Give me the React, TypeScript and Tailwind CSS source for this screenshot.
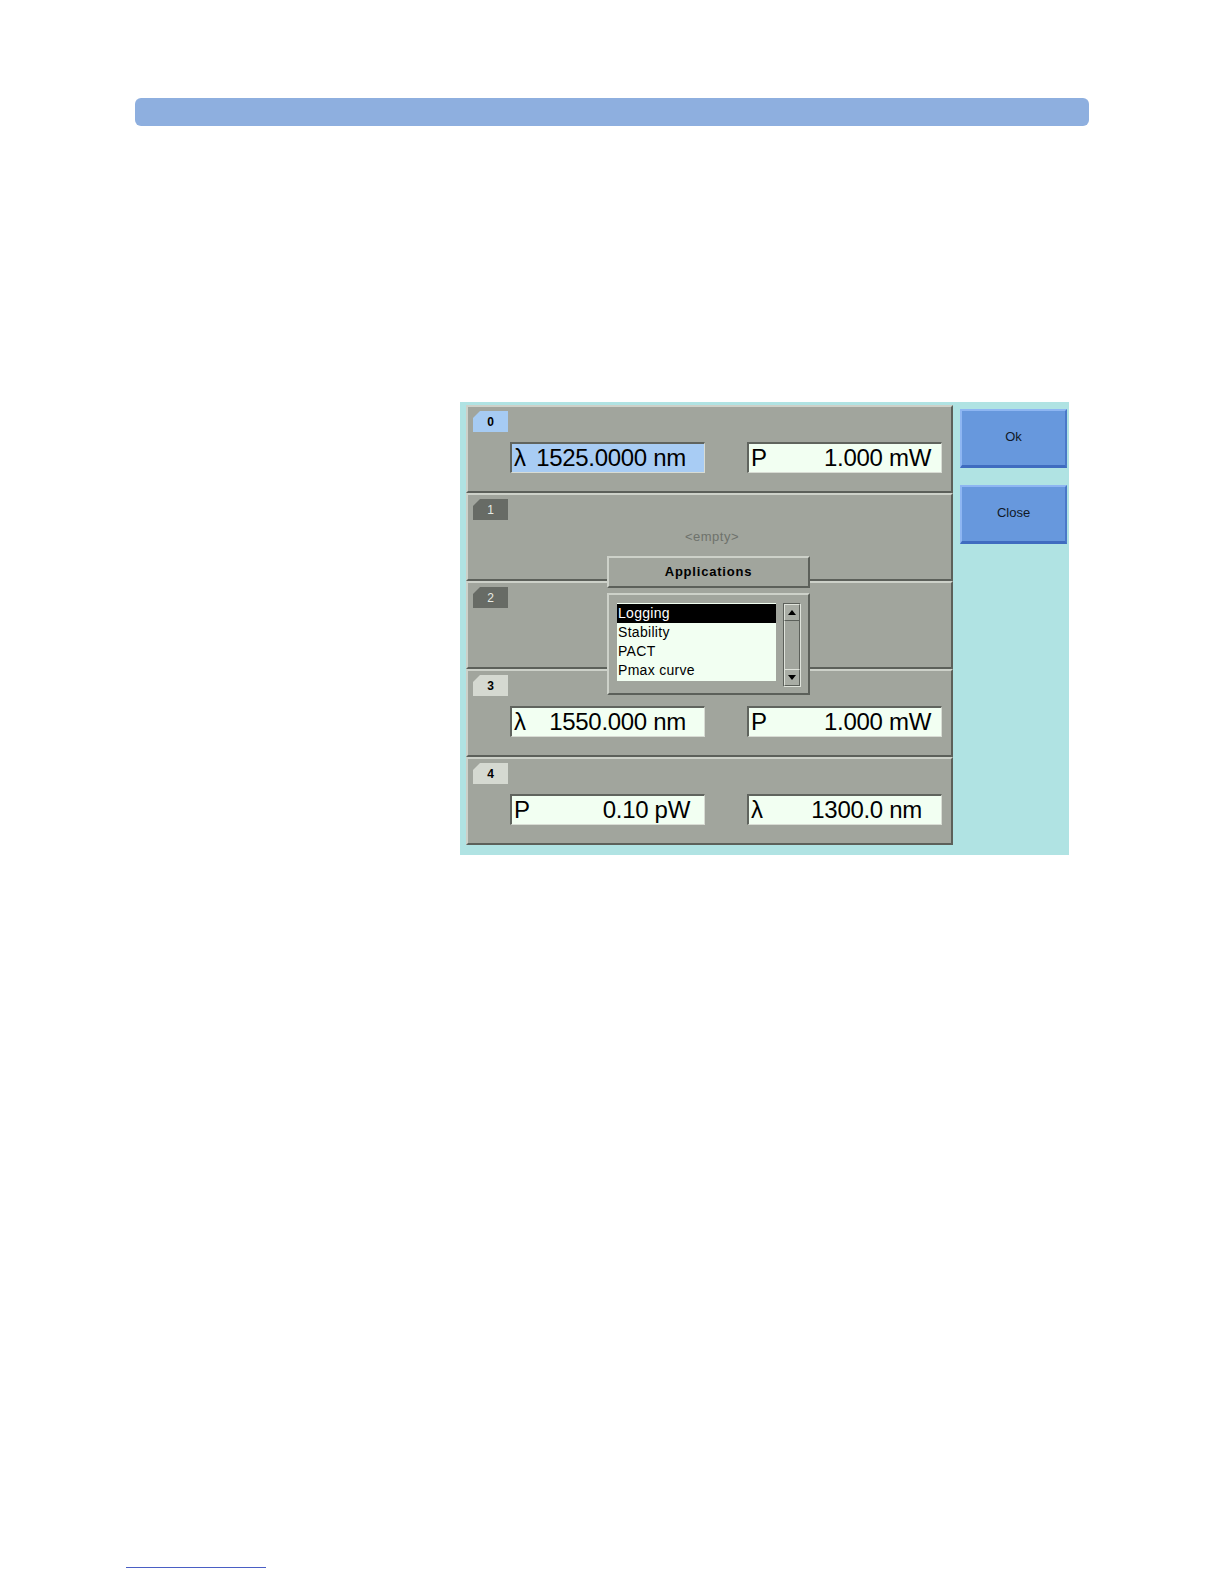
import React from 'react';

type Field = { sym: string; value: string; pr: string; hi?: boolean };

interface SlotData {
  id: string;
  tab: 'blue' | 'dark' | 'light';
  fields?: Field[];
  empty?: boolean;
}

const slots: SlotData[] = [
  {
    id: '0',
    tab: 'blue',
    fields: [
      { sym: 'λ', value: '1525.0000 nm', pr: 'pr-[18px]', hi: true },
      { sym: 'P', value: '1.000 mW', pr: 'pr-[10px]' },
    ],
  },
  { id: '1', tab: 'dark', empty: true },
  { id: '2', tab: 'dark' },
  {
    id: '3',
    tab: 'light',
    fields: [
      { sym: 'λ', value: '1550.000 nm', pr: 'pr-[18px]' },
      { sym: 'P', value: '1.000 mW', pr: 'pr-[10px]' },
    ],
  },
  {
    id: '4',
    tab: 'light',
    fields: [
      { sym: 'P', value: '0.10 pW', pr: 'pr-[14px]' },
      { sym: 'λ', value: '1300.0 nm', pr: 'pr-[19px]' },
    ],
  },
];

const font = { fontFamily: '"Liberation Sans", Arial, sans-serif' };

function Tab({ id, tone }: { id: string; tone: SlotData['tab'] }) {
  const tones = {
    blue: 'bg-[#a6cbf3] text-black',
    dark: 'bg-[#676b65] text-[#e8ece4] font-normal',
    light: 'bg-[#d5d9d1] text-black',
  };
  return (
    <div
      className={`flex h-[21px] w-[35px] items-center justify-center text-[12px] font-bold [clip-path:polygon(7px_0,100%_0,100%_100%,0_100%,0_7px)] ${tones[tone]}`}
    >
      {id}
    </div>
  );
}

function ValueField({ f }: { f: Field }) {
  return (
    <div
      className={`flex h-[31px] w-[195px] items-center justify-between border-t-2 border-l-2 border-b border-r border-t-[#60645e] border-l-[#60645e] border-b-[#d8dcd4] border-r-[#d8dcd4] pl-[2px] text-[24px] leading-none text-black ${f.pr} ${
        f.hi ? 'bg-[#a8ccf4]' : 'bg-[#f2fff2]'
      }`}
    >
      <span>{f.sym}</span>
      <span className="tracking-[-0.3px]">{f.value}</span>
    </div>
  );
}

function Slot({ s }: { s: SlotData }) {
  return (
    <div className="relative flex h-[88px] flex-col border-t-2 border-l-2 border-b-2 border-r-2 border-t-[#cdd1c9] border-l-[#cdd1c9] border-b-[#5c605a] border-r-[#5c605a] bg-[#a1a59d] pl-[5px] pt-[4px]">
      <Tab id={s.id} tone={s.tab} />
      {s.fields && (
        <div className="ml-[37px] mt-[10px] flex gap-[42px]">
          {s.fields.map((f, i) => (
            <ValueField key={i} f={f} />
          ))}
        </div>
      )}
      {s.empty && (
        <div className="mt-[7px] text-center text-[13px] tracking-[0.5px] text-[#6e726c]">&lt;empty&gt;</div>
      )}
    </div>
  );
}

function SideButton({ label }: { label: string }) {
  return (
    <button className="flex h-[59px] w-[107px] items-center justify-center border-t-2 border-l-2 border-b-[3px] border-r-2 border-t-[#8eb6f2] border-l-[#8eb6f2] border-b-[#3f6cc0] border-r-[#4a78c8] bg-[#6798dd] pb-[2px] text-[13px] text-[#101828]">
      {label}
    </button>
  );
}

function ScrollArrow({ up }: { up?: boolean }) {
  return (
    <div className="flex h-[17px] items-center justify-center border-t border-l border-b border-r border-t-[#dfe3db] border-l-[#dfe3db] border-b-[#5c605a] border-r-[#5c605a] bg-[#a9ada5]">
      <svg width="8" height="5" viewBox="0 0 8 5">
        {up ? <polygon points="0,5 8,5 4,0" fill="#000" /> : <polygon points="0,0 8,0 4,5" fill="#000" />}
      </svg>
    </div>
  );
}

function ApplicationsPopup() {
  const items = ['Logging', 'Stability', 'PACT', 'Pmax curve'];
  return (
    <div className="absolute left-[147px] top-[154px] w-[203px]">
      <div className="flex h-[32px] items-center justify-center border-t-2 border-l-2 border-b-2 border-r-2 border-t-[#cdd1c9] border-l-[#cdd1c9] border-b-[#5c605a] border-r-[#5c605a] bg-[#a1a59d] text-[13px] font-bold tracking-[0.8px] text-black">
        Applications
      </div>
      <div className="mt-[5px] flex h-[102px] gap-[7px] border-t-2 border-l-2 border-b-2 border-r-2 border-t-[#cdd1c9] border-l-[#cdd1c9] border-b-[#5c605a] border-r-[#5c605a] bg-[#a1a59d] pl-[8px] pt-[8px]">
        <div className="h-[78px] w-[159px] bg-[#f2fff2] pt-[1px]">
          {items.map((it, i) => (
            <div
              key={it}
              className={`flex h-[19px] items-center pl-[1px] text-[14px] tracking-[0.3px] ${
                i === 0 ? 'bg-black text-white' : 'text-black'
              }`}
            >
              {it}
            </div>
          ))}
        </div>
        <div className="flex h-[84px] w-[18px] flex-col border border-t-[#5c605a] border-l-[#5c605a] border-b-[#dfe3db] border-r-[#dfe3db] bg-[#a1a59d]">
          <ScrollArrow up />
          <div className="flex-1 border-l border-r border-l-[#dfe3db] border-r-[#5c605a]" />
          <ScrollArrow />
        </div>
      </div>
    </div>
  );
}

export default function App() {
  return (
    <div className="bg-white pb-[8px]" style={font}>
      <div className="pt-[98px]">
        <div className="ml-[135px] h-[28px] w-[954px] rounded-[6px] bg-[#8eafdf]" />
      </div>

      <div className="relative ml-[460px] mt-[276px] flex h-[453px] w-[609px] gap-[7px] bg-[#b0e3e3] pl-[6px] pt-[3px]">
        <div className="flex w-[487px] flex-col">
          {slots.map((s) => (
            <Slot key={s.id} s={s} />
          ))}
        </div>
        <div className="flex flex-col gap-[17px] pt-[4px]">
          <SideButton label="Ok" />
          <SideButton label="Close" />
        </div>
        <ApplicationsPopup />
      </div>

      <div className="ml-[126px] mt-[712px] h-px w-[140px] bg-[#4a5fc4]" />
    </div>
  );
}
